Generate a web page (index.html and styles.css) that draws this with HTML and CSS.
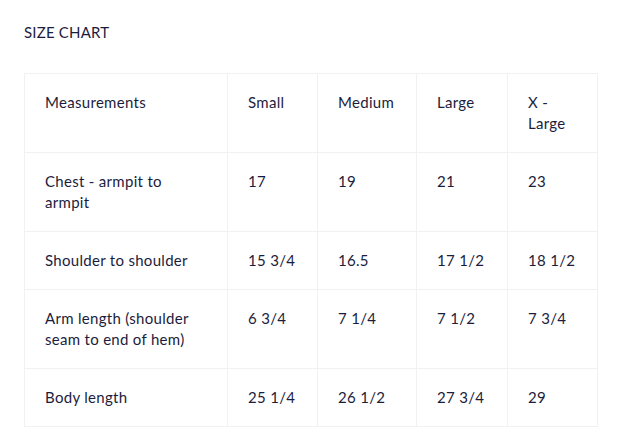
FILE: index.html
```html
<!DOCTYPE html>
<html>
<head>
<meta charset="utf-8">
<link rel="stylesheet" href="styles.css">
</head>
<body>
<div class="page">
  <h2 class="title">SIZE CHART</h2>
  <table class="chart">
    <colgroup>
      <col class="c1"><col class="c2"><col class="c3"><col class="c4"><col class="c5">
    </colgroup>
    <tr><td>Measurements</td><td>Small</td><td>Medium</td><td>Large</td><td>X -<br>Large</td></tr>
    <tr><td>Chest - armpit to<br>armpit</td><td>17</td><td>19</td><td>21</td><td>23</td></tr>
    <tr><td>Shoulder to shoulder</td><td>15 3/4</td><td>16.5</td><td>17 1/2</td><td>18 1/2</td></tr>
    <tr><td>Arm length (shoulder<br>seam to end of hem)</td><td>6 3/4</td><td>7 1/4</td><td>7 1/2</td><td>7 3/4</td></tr>
    <tr><td>Body length</td><td>25 1/4</td><td>26 1/2</td><td>27 3/4</td><td>29</td></tr>
  </table>
</div>
</body>
</html>
```
FILE: styles.css
```css
html, body { margin: 0; padding: 0; background: #fff; }
.page {
  padding: 22px 24px 0 24px;
  font-family: "Lato", "Noto Sans", sans-serif;
  color: #1c1d3d;
}
.title {
  margin: 0 0 31px 0;
  font-size: 15px;
  font-weight: 400;
  line-height: 20px;
  letter-spacing: 0.2px;
}
.chart {
  border-collapse: collapse;
  table-layout: fixed;
  width: 573px;
  font-size: 15px;
  letter-spacing: 0.3px;
}
.c1 { width: 203px; }
.c2 { width: 90px; }
.c3 { width: 99px; }
.c4 { width: 91px; }
.c5 { width: 90px; }
.chart td {
  border: 1px solid #f1f1f1;
  padding: 18px 20px;
  line-height: 21px;
  vertical-align: top;
}
```
